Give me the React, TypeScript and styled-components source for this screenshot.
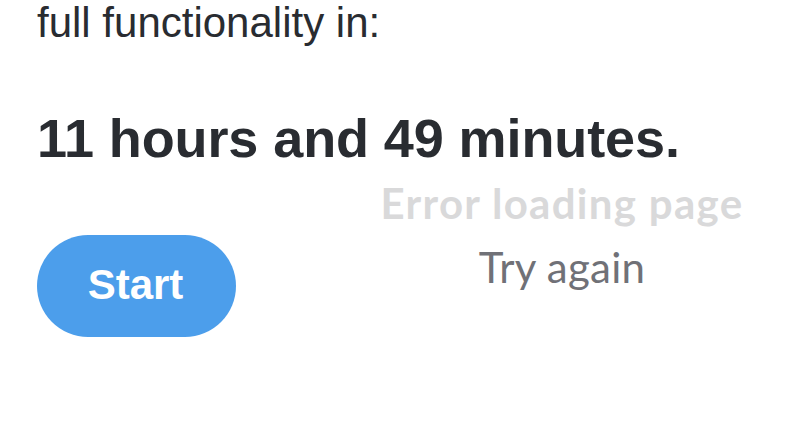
import React from 'react';
import styled, { createGlobalStyle } from 'styled-components';

const Global = createGlobalStyle`
  html, body {
    margin: 0;
    padding: 0;
    background: #ffffff;
  }
`;

const Page = styled.div`
  position: relative;
  width: 812px;
  height: 427px;
  overflow: hidden;
  padding: 0 37px;
  box-sizing: border-box;
  font-family: 'Liberation Sans', Arial, sans-serif;
  color: #292c31;
`;

const Intro = styled.div`
  font-size: 42px;
  line-height: 46px;
`;

const Countdown = styled.div`
  margin-top: 62px;
  font-size: 54px;
  font-weight: bold;
  line-height: 60px;
  letter-spacing: -0.1px;
`;

const StartButton = styled.button`
  display: block;
  margin-top: 67px;
  width: 199px;
  height: 102px;
  border: none;
  border-radius: 51px;
  background: #4c9eeb;
  color: #ffffff;
  font-family: 'Liberation Sans', Arial, sans-serif;
  font-size: 42px;
  font-weight: bold;
  padding: 0 2px 2px 0;
`;

// overlay message that sits on top of the page content
const ErrorOverlay = styled.div`
  position: absolute;
  left: 362px;
  top: 177px;
  width: 400px;
  display: flex;
  flex-direction: column;
  align-items: center;
  font-family: Lato, 'Open Sans', sans-serif;
`;

const ErrorTitle = styled.div`
  font-size: 42px;
  font-weight: bold;
  line-height: 52px;
  letter-spacing: 1.3px;
  color: #d9d9da;
`;

const Retry = styled.div`
  margin-top: 12px;
  font-size: 42px;
  line-height: 52px;
  letter-spacing: 0.3px;
  color: #707177;
`;

function App() {
  return (
    <>
      <Global />
      <Page>
        <Intro>full functionality in:</Intro>
        <Countdown>11 hours and 49 minutes.</Countdown>
        <StartButton>Start</StartButton>
        <ErrorOverlay>
          <ErrorTitle>Error loading page</ErrorTitle>
          <Retry>Try again</Retry>
        </ErrorOverlay>
      </Page>
    </>
  );
}

export default App;
